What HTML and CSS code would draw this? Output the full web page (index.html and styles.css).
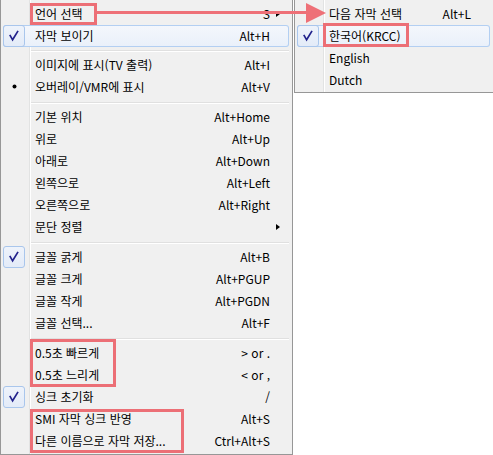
FILE: index.html
```html
<!DOCTYPE html>
<html lang="ko">
<head>
<meta charset="utf-8">
<link rel="stylesheet" href="styles.css">
</head>
<body>
<div class="stage">
  <div class="menu main">
    <div class="item"><span class="icon"></span><span class="label">언어 선택</span><span class="key">S</span><span class="more"><i class="tri"></i></span></div>
    <div class="item hover"><span class="icon checked"><svg viewBox="0 0 22 22" width="22" height="22"><path d="M7.2 10.6 L9.6 14.8 L14.6 6.6" /></svg></span><span class="label">자막 보이기</span><span class="key">Alt+H</span><span class="more"></span></div>
    <div class="sep short"></div>
    <div class="item"><span class="icon"></span><span class="label">이미지에 표시(TV 출력)</span><span class="key">Alt+I</span><span class="more"></span></div>
    <div class="item"><span class="icon"><svg viewBox="0 0 22 22" width="22" height="22"><circle cx="11.5" cy="10.5" r="2" /></svg></span><span class="label">오버레이/VMR에 표시</span><span class="key">Alt+V</span><span class="more"></span></div>
    <div class="sep"></div>
    <div class="item"><span class="icon"></span><span class="label">기본 위치</span><span class="key">Alt+Home</span><span class="more"></span></div>
    <div class="item"><span class="icon"></span><span class="label">위로</span><span class="key">Alt+Up</span><span class="more"></span></div>
    <div class="item"><span class="icon"></span><span class="label">아래로</span><span class="key">Alt+Down</span><span class="more"></span></div>
    <div class="item"><span class="icon"></span><span class="label">왼쪽으로</span><span class="key">Alt+Left</span><span class="more"></span></div>
    <div class="item"><span class="icon"></span><span class="label">오른쪽으로</span><span class="key">Alt+Right</span><span class="more"></span></div>
    <div class="item"><span class="icon"></span><span class="label">문단 정렬</span><span class="key"></span><span class="more"><i class="tri"></i></span></div>
    <div class="sep"></div>
    <div class="item"><span class="icon checked"><svg viewBox="0 0 22 22" width="22" height="22"><path d="M7.2 10.6 L9.6 14.8 L14.6 6.6" /></svg></span><span class="label">글꼴 굵게</span><span class="key">Alt+B</span><span class="more"></span></div>
    <div class="item"><span class="icon"></span><span class="label">글꼴 크게</span><span class="key">Alt+PGUP</span><span class="more"></span></div>
    <div class="item"><span class="icon"></span><span class="label">글꼴 작게</span><span class="key">Alt+PGDN</span><span class="more"></span></div>
    <div class="item"><span class="icon"></span><span class="label">글꼴 선택...</span><span class="key">Alt+F</span><span class="more"></span></div>
    <div class="sep"></div>
    <div class="item"><span class="icon"></span><span class="label">0.5초 빠르게</span><span class="key">&gt; or .</span><span class="more"></span></div>
    <div class="item"><span class="icon"></span><span class="label">0.5초 느리게</span><span class="key">&lt; or ,</span><span class="more"></span></div>
    <div class="item"><span class="icon checked"><svg viewBox="0 0 22 22" width="22" height="22"><path d="M7.2 10.6 L9.6 14.8 L14.6 6.6" /></svg></span><span class="label">싱크 초기화</span><span class="key">/</span><span class="more"></span></div>
    <div class="item"><span class="icon"></span><span class="label">SMI 자막 싱크 반영</span><span class="key">Alt+S</span><span class="more"></span></div>
    <div class="item"><span class="icon"></span><span class="label">다른 이름으로 자막 저장...</span><span class="key">Ctrl+Alt+S</span><span class="more"></span></div>
  </div>

  <div class="menu submenu">
    <div class="item"><span class="icon"></span><span class="label">다음 자막 선택</span><span class="key">Alt+L</span><span class="more"></span></div>
    <div class="item hover"><span class="icon checked"><svg viewBox="0 0 22 22" width="22" height="22"><path d="M7.2 10.6 L9.6 14.8 L14.6 6.6" /></svg></span><span class="label">한국어(KRCC)</span><span class="key"></span><span class="more"></span></div>
    <div class="item"><span class="icon"></span><span class="label">English</span><span class="key"></span><span class="more"></span></div>
    <div class="item"><span class="icon"></span><span class="label">Dutch</span><span class="key"></span><span class="more"></span></div>
  </div>

  <div class="mark mark-lang"></div>
  <div class="mark mark-korean"></div>
  <div class="mark mark-speed"></div>
  <div class="mark mark-save"></div>
  <svg class="pointer" width="240" height="26" viewBox="0 0 240 26">
    <rect x="0" y="10" width="212" height="3" />
    <polygon points="209,2 209,22 229,12" />
  </svg>
</div>
</body>
</html>
```

FILE: styles.css
```css
html, body {
  margin: 0;
  padding: 0;
  overflow: hidden;
  background: #ffffff;
}

body {
  font-family: "Noto Sans CJK KR", "Noto Sans", sans-serif;
  font-size: 12px;
  color: #000;
}

.stage {
  position: relative;
  width: 493px;
  height: 455px;
}

.menu {
  box-sizing: border-box;
  border: 1px solid #979797;
  border-top: none;
  background: linear-gradient(to right, #f0f0f0 28px, #e2e3e3 28px, #e2e3e3 29px, #ffffff 29px, #ffffff 30px, #f0f0f0 30px);
}

.main {
  width: 293px;
  height: 455px;
  padding: 3px 3px 2px 2px;
}

.submenu {
  position: absolute;
  left: 294px;
  top: 0;
  width: 206px;
  padding: 3px 9px 1px 2px;
}

.item {
  display: flex;
  align-items: center;
  height: 22px;
  line-height: 22px;
  white-space: nowrap;
  border-radius: 3px;
}

.item.hover {
  background: linear-gradient(#f4f7fc, #e9f0fa);
  box-shadow: inset 0 0 0 1px #b3cff2;
}

.icon {
  flex: none;
  width: 22px;
  height: 22px;
  margin-right: 10px;
  box-sizing: border-box;
  border-radius: 3px;
}

.icon svg {
  display: block;
}

.icon.checked {
  background: linear-gradient(#eef3fb, #e3ebf8);
  border: 1px solid #a9c6ec;
}

.icon.checked svg {
  margin: -1px;
}

.icon path {
  fill: none;
  stroke: #22228c;
  stroke-width: 1.7;
  stroke-linecap: square;
  stroke-linejoin: miter;
}

.icon circle {
  fill: #000;
}

.label {
  flex: 1;
}

.key {
  flex: none;
  text-align: right;
}

.more {
  flex: none;
  width: 19px;
  position: relative;
  height: 22px;
}

.tri {
  position: absolute;
  left: 6px;
  top: 8px;
  width: 0;
  height: 0;
  border-top: 3.5px solid transparent;
  border-bottom: 3.5px solid transparent;
  border-left: 4px solid #000;
}

.sep {
  height: 8px;
  box-sizing: border-box;
  padding-top: 4px;
  padding-left: 28px;
}

.sep.short {
  height: 7px;
  padding-top: 3px;
}

.sep::before {
  content: "";
  display: block;
  height: 1px;
  background: #e0e0e0;
  border-bottom: 1px solid #ffffff;
}

.mark {
  position: absolute;
  box-sizing: border-box;
  border: 3px solid #ec6f76;
}

.mark-lang {
  left: 30px;
  top: 3px;
  width: 67px;
  height: 22px;
}

.mark-korean {
  left: 323px;
  top: 23px;
  width: 86px;
  height: 24px;
}

.mark-speed {
  left: 30px;
  top: 339px;
  width: 86px;
  height: 48px;
}

.mark-save {
  left: 30px;
  top: 409px;
  width: 154px;
  height: 44px;
}

.pointer {
  position: absolute;
  left: 97px;
  top: 1px;
}

.pointer rect,
.pointer polygon {
  fill: #ee7077;
}
```
